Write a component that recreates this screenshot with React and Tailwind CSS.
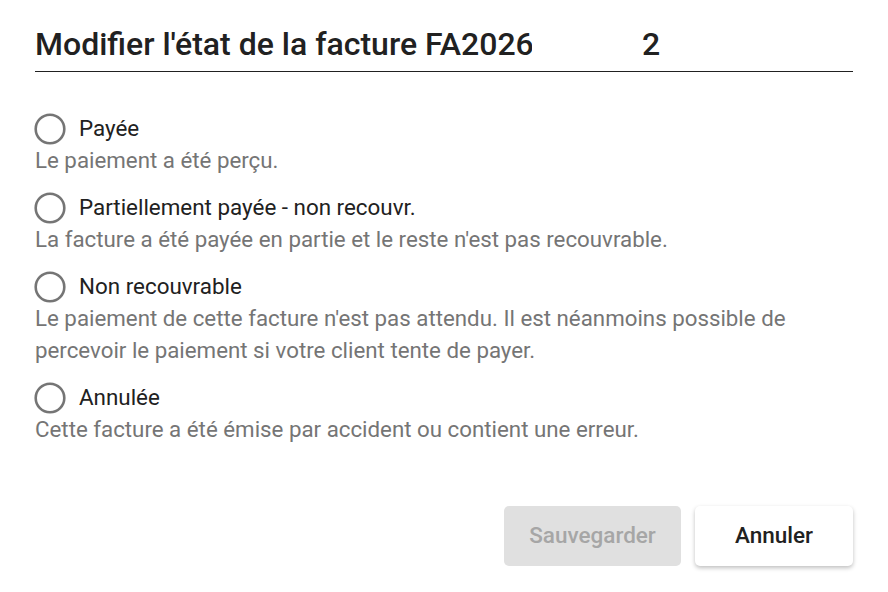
const options = [
  {
    label: "Payée",
    desc: ["Le paiement a été perçu."],
  },
  {
    label: "Partiellement payée - non recouvr.",
    desc: ["La facture a été payée en partie et le reste n'est pas recouvrable."],
  },
  {
    label: "Non recouvrable",
    desc: [
      "Le paiement de cette facture n'est pas attendu. Il est néanmoins possible de",
      "percevoir le paiement si votre client tente de payer.",
    ],
  },
  {
    label: "Annulée",
    desc: ["Cette facture a été émise par accident ou contient une erreur."],
  },
];

const Radio = () => (
  <svg width="32" height="32" viewBox="0 0 32 32" className="shrink-0">
    <circle cx="16" cy="16" r="14.3" fill="none" stroke="#757575" strokeWidth="2.6" />
  </svg>
);

const App = () => {
  return (
    <div className="w-[888px] h-[592px] bg-white px-[35px] pt-[24px] font-['Roboto',sans-serif]">
      <div className="flex items-end border-b border-[#212121] h-[48px] pb-[9px]">
        <h1 className="text-[32px] leading-[36px] font-medium text-[#212121] w-[497px] overflow-hidden whitespace-nowrap">
          Modifier l'état de la facture FA2026
        </h1>
        <span className="ml-[110px] text-[32px] leading-[36px] font-medium text-[#212121]">2</span>
      </div>

      <div className="mt-[42px] flex flex-col gap-[17px]">
        {options.map((o) => (
          <div key={o.label}>
            <label className="flex items-center gap-[13px] h-[30px] -ml-[1px]">
              <Radio />
              <span className="text-[22.4px] text-[#212121]">{o.label}</span>
            </label>
            {o.desc.map((d) => (
              <p key={d} className="text-[22.3px] leading-[32px] text-[#757575] whitespace-nowrap">
                {d}
              </p>
            ))}
          </div>
        ))}
      </div>

      <div className="flex justify-end gap-[14px] mt-[61px]">
        <button className="w-[177px] h-[60px] rounded-[5px] bg-[#e0e0e0] text-[22.5px] font-medium text-[#a6a6a6]">
          Sauvegarder
        </button>
        <button className="w-[158px] h-[60px] rounded-[5px] bg-white text-[22.5px] font-medium text-[#212121] shadow-[0_2px_4px_rgba(0,0,0,0.25)]">
          Annuler
        </button>
      </div>
    </div>
  );
};

export default App;
